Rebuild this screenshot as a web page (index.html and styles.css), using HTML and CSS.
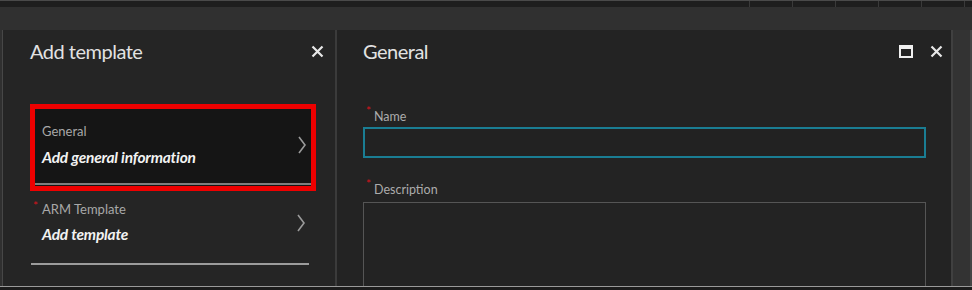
FILE: index.html
```html
<!DOCTYPE html>
<html lang="en">
<head>
    <meta charset="UTF-8">
    <title>Add template</title>
    <link rel="stylesheet" href="styles.css">
</head>
<body>
    <div class="topbar">
        <div class="topbar-cells">
            <span></span><span></span><span></span><span></span><span></span><span class="last"></span>
        </div>
    </div>

    <div class="workspace">
        <div class="blade blade-menu">
            <div class="blade-header">
                <h2 class="blade-title">Add template</h2>
                <svg class="icon-close" width="13" height="13" viewBox="0 0 13 13">
                    <path d="M1.5 1.5 L11.5 11.5 M11.5 1.5 L1.5 11.5" stroke="#e8e8e8" stroke-width="2.2" fill="none"/>
                </svg>
            </div>

            <div class="selected">
                <div class="nav-item">
                    <div class="nav-text">
                        <div class="nav-label">General</div>
                        <div class="nav-value">Add general information</div>
                    </div>
                    <svg class="chevron" width="10" height="20" viewBox="0 0 10 20">
                        <polyline points="2,2 8,10 2,18" stroke="#9a9a9a" stroke-width="1.6" fill="none"/>
                    </svg>
                </div>
            </div>

            <div class="nav-item nav-item-plain">
                <div class="nav-text">
                    <div class="nav-label"><span class="req">*</span>ARM Template</div>
                    <div class="nav-value">Add template</div>
                </div>
                <svg class="chevron" width="10" height="20" viewBox="0 0 10 20">
                    <polyline points="2,2 8,10 2,18" stroke="#9a9a9a" stroke-width="1.6" fill="none"/>
                </svg>
            </div>
        </div>

        <div class="blade blade-form">
            <div class="blade-header">
                <h2 class="blade-title">General</h2>
                <div class="blade-actions">
                    <svg width="14" height="13" viewBox="0 0 14 13">
                        <rect x="1" y="1" width="12" height="11" stroke="#f0f0f0" stroke-width="2" fill="none"/>
                        <rect x="1" y="1" width="12" height="3" fill="#f0f0f0"/>
                    </svg>
                    <svg width="13" height="13" viewBox="0 0 13 13">
                        <path d="M1.5 1.5 L11.5 11.5 M11.5 1.5 L1.5 11.5" stroke="#e8e8e8" stroke-width="2.2" fill="none"/>
                    </svg>
                </div>
            </div>

            <div class="form">
                <label class="field-label"><span class="req">*</span>Name</label>
                <div class="text-input"></div>

                <label class="field-label field-label-gap"><span class="req">*</span>Description</label>
                <div class="text-area"></div>
            </div>
        </div>

        <div class="side-strip"></div>
    </div>
</body>
</html>
```

FILE: styles.css
```css
* {
    margin: 0;
    padding: 0;
    box-sizing: border-box;
}

body {
    width: 972px;
    height: 290px;
    overflow: hidden;
    background: #1c1c1c;
    font-family: Lato, "Open Sans", sans-serif;
    color: #e0e0e0;
}

.topbar {
    height: 7px;
    background: #1e1e1e;
    border-top: 1px solid #4a4a4a;
    display: flex;
    justify-content: flex-end;
}

.topbar-cells {
    display: flex;
}

.topbar-cells span {
    width: 43px;
    border-left: 1px solid #3a3a3a;
}

.topbar-cells .last {
    width: 8px;
}

.workspace {
    height: 280px;
    background: #303030;
    padding-top: 23px;
    display: flex;
    border-bottom: 1px solid #9a9a9a;
}

.blade {
    height: 100%;
    overflow: hidden;
}

.blade-menu {
    width: 335px;
    margin-left: 2px;
    background: #252525;
    border-left: 1px solid #474747;
    border-right: 2px solid #3b3b3b;
}

.blade-form {
    width: 616px;
    background: #232323;
    border-right: 2px solid #404040;
}

.side-strip {
    flex: 1;
    background: #333333;
    border-right: 2px solid #454545;
}

.blade-header {
    display: flex;
    align-items: center;
    justify-content: space-between;
    padding: 10px 8px 0 26px;
    height: 32px;
}

.blade-menu .blade-header {
    padding: 10px 11px 0 27px;
}

.blade-title {
    font-size: 20px;
    font-weight: 400;
    line-height: 22px;
    letter-spacing: -0.5px;
    color: #e2e2e2;
}

.icon-close {
    display: block;
}

.blade-actions {
    display: flex;
    align-items: center;
    gap: 17px;
}

.blade-actions svg {
    display: block;
}

/* menu items */
.selected {
    margin: 42px 0 0 27px;
    width: 286px;
    border: 5px solid #ee0000;
    background: #151515;
    padding-bottom: 1px;
}

.nav-item {
    display: flex;
    align-items: center;
    justify-content: space-between;
    padding: 14px 4px 16px 7px;
    border-bottom: 2px solid #7e7e7e;
}

.nav-item-plain {
    margin: 10px 0 0 28px;
    width: 278px;
    padding: 0 3px 19px 11px;
    border-bottom-color: #9c9c9c;
}

.nav-label {
    position: relative;
    font-size: 13px;
    line-height: 16px;
    color: #a8a8a8;
}

.nav-value {
    margin-top: 8px;
    font-size: 15.5px;
    line-height: 20px;
    font-style: italic;
    font-weight: 700;
    color: #f2f2f2;
    letter-spacing: -0.2px;
}

.nav-item-plain .nav-value {
    margin-top: 7px;
}

.chevron {
    display: block;
}

.req {
    position: absolute;
    left: -9px;
    top: -3px;
    color: #d8141c;
    font-size: 12px;
}

/* form */
.form {
    padding: 47px 0 0 26px;
}

.field-label {
    display: block;
    position: relative;
    margin-left: 11px;
    font-size: 12.5px;
    line-height: 16px;
    color: #acacac;
}

.field-label .req {
    left: -8px;
    top: -6px;
}

.field-label-gap {
    margin-top: 24px;
}

.text-input {
    margin-top: 2px;
    width: 563px;
    height: 31px;
    border: 2px solid #1a7d93;
    background: #222222;
}

.text-area {
    margin-top: 4px;
    width: 563px;
    height: 120px;
    border: 1px solid #555555;
    background: #232323;
}
```
